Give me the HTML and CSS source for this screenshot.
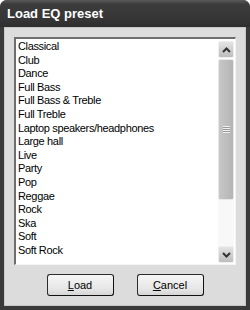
FILE: index.html
```html
<!DOCTYPE html>
<html>
<head>
<meta charset="utf-8">
<link rel="stylesheet" href="styles.css">
</head>
<body>
<div class="window">
  <div class="titlebar">Load EQ preset</div>
  <div class="client">
    <div class="listbox">
      <ul class="items">
        <li>Classical</li>
        <li>Club</li>
        <li>Dance</li>
        <li>Full Bass</li>
        <li>Full Bass &amp; Treble</li>
        <li>Full Treble</li>
        <li>Laptop speakers/headphones</li>
        <li>Large hall</li>
        <li>Live</li>
        <li>Party</li>
        <li>Pop</li>
        <li>Reggae</li>
        <li>Rock</li>
        <li>Ska</li>
        <li>Soft</li>
        <li>Soft Rock</li>
      </ul>
      <div class="scrollbar">
        <div class="sbtn">
          <svg width="9" height="6" viewBox="0 0 9 6"><path d="M1 5 L4.5 1.5 L8 5" fill="none" stroke="#333" stroke-width="2"/></svg>
        </div>
        <div class="thumb">
          <div class="grip"></div>
        </div>
        <div class="track"></div>
        <div class="sbtn">
          <svg width="9" height="6" viewBox="0 0 9 6"><path d="M1 1 L4.5 4.5 L8 1" fill="none" stroke="#333" stroke-width="2"/></svg>
        </div>
      </div>
    </div>
    <div class="buttons">
      <button class="btn"><u>L</u>oad</button>
      <button class="btn"><u>C</u>ancel</button>
    </div>
  </div>
</div>
</body>
</html>
```
FILE: styles.css
```css
html, body {
  margin: 0;
  padding: 0;
  background: #ffffff;
}
.window {
  width: 250px;
  height: 310px;
  background: #3a3a3a;
  border-radius: 7px 7px 0 0;
  display: flex;
  flex-direction: column;
  box-sizing: border-box;
  font-family: "Liberation Sans", Arial, sans-serif;
}
.titlebar {
  height: 27px;
  box-sizing: border-box;
  padding: 6px 0 0 7px;
  color: #ffffff;
  font-weight: bold;
  font-size: 13px;
  line-height: 16px;
  background: linear-gradient(#5a5a5a 0px, #3c3c3c 4px, #353535 20px, #2e2e2e 27px);
  border-radius: 7px 7px 0 0;
}
.client {
  flex: 1;
  margin: 0 4px 4px 4px;
  background: #dcdcdc;
  border: 1px solid #c8c8c8;
  padding: 9px 9px 0 9px;
  display: flex;
  flex-direction: column;
}
.listbox {
  height: 228px;
  background: #ffffff;
  border-top: 2px solid #6e6e6e;
  border-left: 2px solid #6e6e6e;
  border-right: 1px solid #f4f4f4;
  border-bottom: 1px solid #f4f4f4;
  display: flex;
  box-sizing: border-box;
}
.items {
  list-style: none;
  margin: 0;
  padding: 1px 0 0 2px;
  flex: 1;
  font-size: 11px;
  letter-spacing: -0.35px;
  line-height: 13.6px;
  color: #000;
}
.scrollbar {
  width: 16px;
  display: flex;
  flex-direction: column;
  padding: 2px 1px 1px 0;
}
.sbtn {
  height: 15px;
  background: linear-gradient(#e4e4e4, #bdbdbd);
  border: 1px solid #eeeeee;
  border-radius: 2px;
  display: flex;
  align-items: center;
  justify-content: center;
}
.thumb {
  height: 139px;
  margin-top: 1px;
  background: linear-gradient(90deg, #c7c7c7, #bcbcbc 60%, #b4b4b4);
  border: 1px solid #e8e8e8;
  border-radius: 2px;
  display: flex;
  align-items: center;
  justify-content: center;
}
.grip {
  width: 7px;
  height: 7px;
  background: repeating-linear-gradient(#f0f0f0 0 1px, #9a9a9a 1px 2px);
}
.track {
  flex: 1;
  background: #f8f8f8;
}
.buttons {
  display: flex;
  justify-content: center;
  gap: 23px;
  padding-top: 9px;
}
.btn {
  width: 67px;
  height: 22px;
  background: linear-gradient(#f6f6f6, #e6e6e6 70%, #d6d6d6);
  border: 1px solid #2c2c2c;
  border-right-color: #111;
  border-bottom-color: #111;
  border-radius: 3px;
  font-family: "Liberation Sans", Arial, sans-serif;
  font-size: 11px;
  color: #000;
  padding: 0;
}
```
